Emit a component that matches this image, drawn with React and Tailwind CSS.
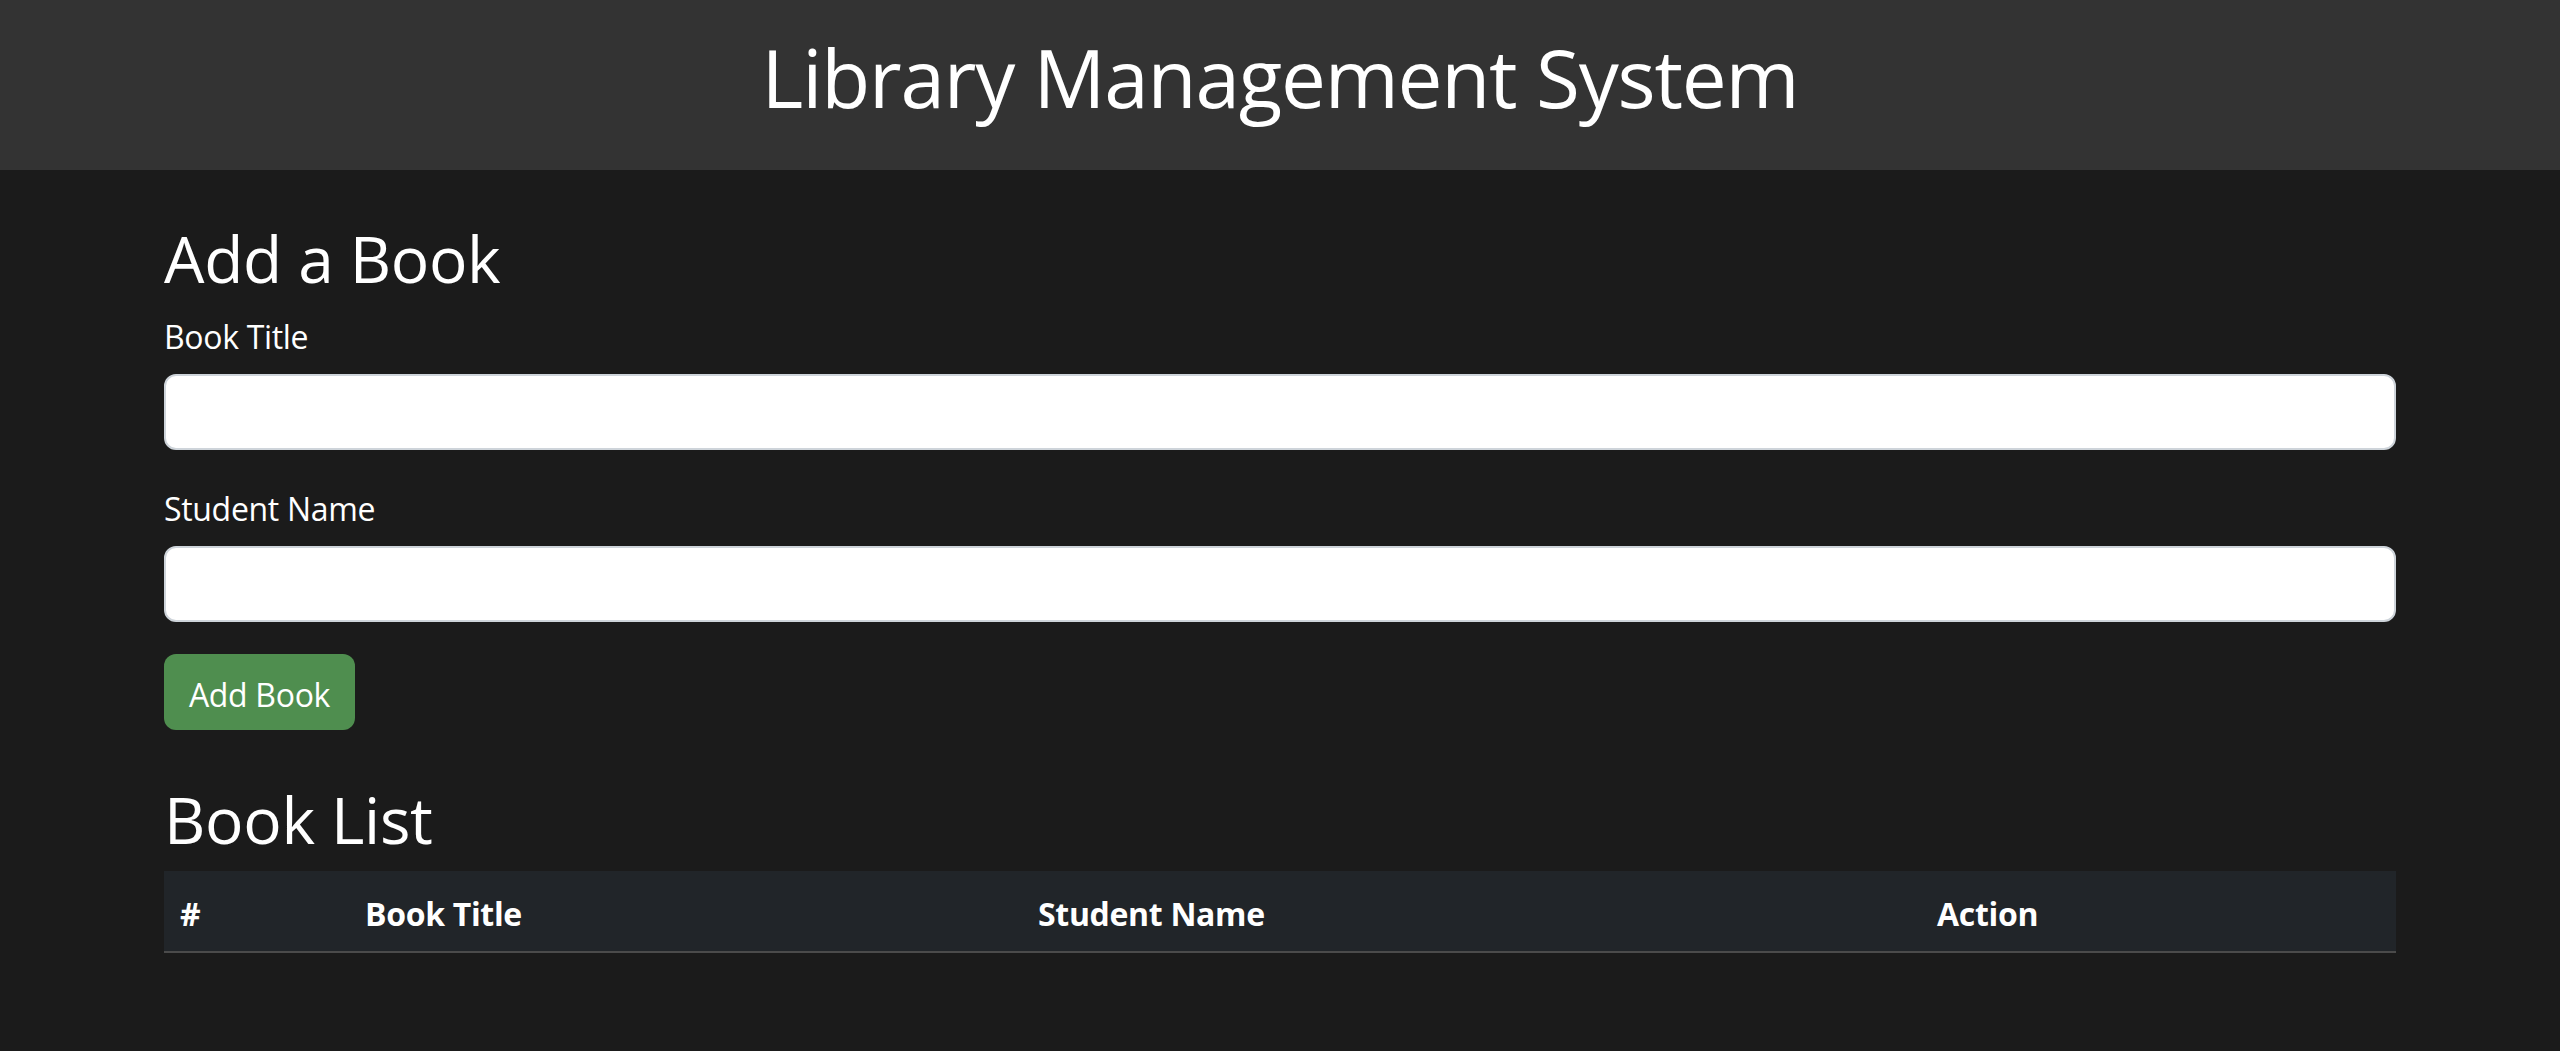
export default function App() {
  return (
    <div className="min-h-screen bg-[#1b1b1b] text-white font-['Open_Sans',sans-serif] tracking-[-0.02em]">
      {/* Header */}
      <header className="h-[170px] bg-[#333333] pt-[29px]">
        <h1 className="text-center text-[80px] leading-[96px] font-medium tracking-[-0.015em]">Library Management System</h1>
      </header>

      <main className="mx-auto w-[2232px] pt-[47px]">
        {/* Add a Book */}
        <h2 className="pt-[3px] mb-[13px] text-[64px] leading-[77px] font-medium">Add a Book</h2>
        <form onSubmit={(e) => e.preventDefault()}>
          <div className="mb-8">
            <label className="pt-[3px] mb-[13px] block text-[32px] leading-[48px]">Book Title</label>
            <input
              type="text"
              className="block h-[76px] w-full rounded-xl border-2 border-[#ced4da] bg-white px-6 text-[32px] text-[#212529] outline-none"
            />
          </div>
          <div className="mb-8">
            <label className="pt-[3px] mb-[13px] block text-[32px] leading-[48px]">Student Name</label>
            <input
              type="text"
              className="block h-[76px] w-full rounded-xl border-2 border-[#ced4da] bg-white px-6 text-[32px] text-[#212529] outline-none"
            />
          </div>
          <button
            type="submit"
            className="h-[76px] w-[191px] rounded-xl bg-[#4f8e4f] pt-[6px] text-[32px] leading-[48px] text-white"
          >
            Add Book
          </button>
        </form>

        {/* Book List */}
        <h2 className="mt-12 pt-[3px] mb-[13px] text-[64px] leading-[77px] font-medium">Book List</h2>
        <table className="w-full table-fixed border-collapse">
          <thead>
            <tr className="bg-[#212529] border-b-2 border-[#4b4b4b] text-left text-[32px] leading-[48px] font-bold">
              <th className="w-[185px] px-4 pt-[19px] pb-[13px]">#</th>
              <th className="w-[673px] px-4 pt-[19px] pb-[13px]">Book Title</th>
              <th className="w-[899px] px-4 pt-[19px] pb-[13px]">Student Name</th>
              <th className="px-4 pt-[19px] pb-[13px]">Action</th>
            </tr>
          </thead>
          <tbody></tbody>
        </table>
      </main>
    </div>
  );
}
